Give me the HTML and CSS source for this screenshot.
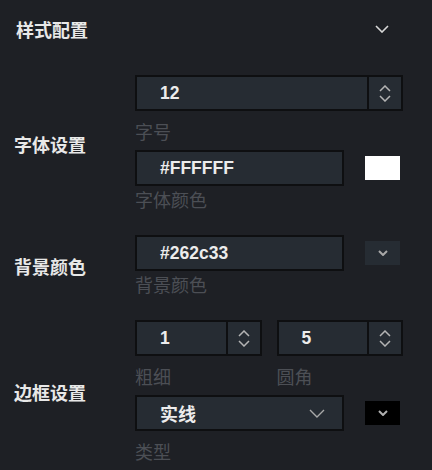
FILE: index.html
```html
<!DOCTYPE html>
<html lang="zh">
<head>
<meta charset="utf-8">
<link rel="stylesheet" href="styles.css">
</head>
<body>
<div class="panel">
  <div class="head">
    <span class="head-title">样式配置</span>
    <svg class="head-chev" width="14" height="8" viewBox="0 0 14 8"><polyline points="1,1 7,7 13,1" fill="none" stroke="#d8d8d8" stroke-width="1.6"/></svg>
  </div>
  <div class="sections">
    <div class="section">
      <div class="label">字体设置</div>
      <div class="fields">
        <div class="field">
          <div class="row">
            <div class="box num"><span class="val">12</span>
              <div class="spin"><svg width="12" height="17" viewBox="0 0 12 17"><polyline points="1,6 6,1 11,6" fill="none" stroke="#b4b4b4" stroke-width="1.5"/><polyline points="1,11 6,16 11,11" fill="none" stroke="#b4b4b4" stroke-width="1.5"/></svg></div>
            </div>
          </div>
          <div class="cap">字号</div>
        </div>
        <div class="field">
          <div class="row">
            <div class="box color"><span class="val">#FFFFFF</span></div>
            <div class="swatch white"></div>
          </div>
          <div class="cap tight">字体颜色</div>
        </div>
      </div>
    </div>
    <div class="section">
      <div class="label">背景颜色</div>
      <div class="fields">
        <div class="field">
          <div class="row">
            <div class="box color"><span class="val">#262c33</span></div>
            <div class="swatch dark"><svg width="10" height="6" viewBox="0 0 10 6"><polyline points="1,1 5,5 9,1" fill="none" stroke="#a8a8a8" stroke-width="2"/></svg></div>
          </div>
          <div class="cap tight">背景颜色</div>
        </div>
      </div>
    </div>
    <div class="section">
      <div class="label">边框设置</div>
      <div class="fields">
        <div class="field">
          <div class="row half">
            <div class="cell">
              <div class="box num"><span class="val">1</span>
                <div class="spin"><svg width="12" height="17" viewBox="0 0 12 17"><polyline points="1,6 6,1 11,6" fill="none" stroke="#b4b4b4" stroke-width="1.5"/><polyline points="1,11 6,16 11,11" fill="none" stroke="#b4b4b4" stroke-width="1.5"/></svg></div>
              </div>
              <div class="cap">粗细</div>
            </div>
            <div class="cell">
              <div class="box num"><span class="val">5</span>
                <div class="spin"><svg width="12" height="17" viewBox="0 0 12 17"><polyline points="1,6 6,1 11,6" fill="none" stroke="#b4b4b4" stroke-width="1.5"/><polyline points="1,11 6,16 11,11" fill="none" stroke="#b4b4b4" stroke-width="1.5"/></svg></div>
              </div>
              <div class="cap">圆角</div>
            </div>
          </div>
        </div>
        <div class="field">
          <div class="row">
            <div class="box color select"><span class="val cjk">实线</span>
              <svg class="sel-chev" width="16" height="9" viewBox="0 0 16 9"><polyline points="1,1 8,8 15,1" fill="none" stroke="#a8a8a8" stroke-width="1.4"/></svg>
            </div>
            <div class="swatch black"><svg width="10" height="6" viewBox="0 0 10 6"><polyline points="1,1 5,5 9,1" fill="none" stroke="#b0b0b0" stroke-width="2"/></svg></div>
          </div>
          <div class="cap">类型</div>
        </div>
      </div>
    </div>
  </div>
</div>
</body>
</html>
```

FILE: styles.css
```css
html, body {
  margin: 0;
  padding: 0;
  background: #1e2025;
}
body {
  font-family: "Noto Sans CJK SC", "Liberation Sans", sans-serif;
  color: #e6e6e6;
}
.panel {
  width: 432px;
  height: 470px;
  background: #1e2025;
}
.head {
  height: 58px;
  display: flex;
  align-items: center;
  justify-content: space-between;
  padding: 0 43px 0 16px;
}
.head-title {
  font-size: 18px;
  font-weight: 700;
  line-height: 20px;
  color: #e8e8e8;
}
.sections {
  padding-top: 17px;
  display: flex;
  flex-direction: column;
  gap: 23px;
}
.section {
  display: flex;
  align-items: center;
  padding-left: 14px;
}
.label {
  width: 121px;
  font-size: 18px;
  font-weight: 700;
  line-height: 20px;
  color: #e8e8e8;
}
.fields {
  width: 268px;
  display: flex;
  flex-direction: column;
  gap: 6px;
}
.field {
  display: flex;
  flex-direction: column;
}
.row {
  display: flex;
  align-items: center;
  gap: 21px;
}
.row.half {
  gap: 15px;
}
.cell {
  flex: 1;
  display: flex;
  flex-direction: column;
}
.box {
  box-sizing: border-box;
  height: 36px;
  border: 2px solid #0e0f11;
  background: #262c33;
  display: flex;
  align-items: center;
}
.num {
  width: 100%;
}
.color {
  width: 209px;
}
.val {
  flex: 1;
  padding-left: 23px;
  font-family: "Liberation Sans", "Noto Sans CJK SC", sans-serif;
  font-size: 17.5px;
  font-weight: 700;
  color: #ececec;
  line-height: 20px;
}
.val.cjk {
  font-family: "Noto Sans CJK SC", sans-serif;
  font-size: 18px;
}
.spin {
  width: 32px;
  height: 100%;
  border-left: 2px solid #0e0f11;
  display: flex;
  align-items: center;
  justify-content: center;
}
.sel-chev {
  margin-right: 17px;
}
.swatch {
  width: 35px;
  height: 24px;
  display: flex;
  align-items: center;
  justify-content: center;
}
.swatch.white {
  background: #ffffff;
}
.swatch.dark {
  background: #262c33;
}
.swatch.black {
  background: #000000;
}
.cap {
  margin-top: 7px;
  font-size: 18px;
  line-height: 26px;
  color: #4c4f55;
}
.cap.tight {
  margin-top: 0;
}
```
